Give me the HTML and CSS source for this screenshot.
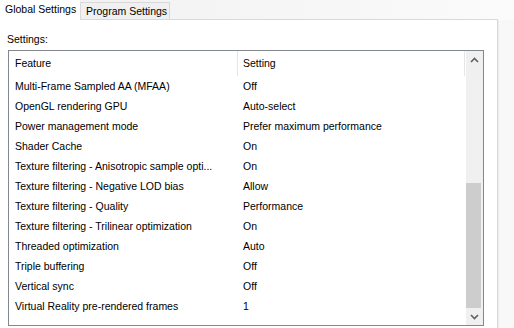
FILE: index.html
```html
<!DOCTYPE html>
<html>
<head>
<meta charset="utf-8">
<link rel="stylesheet" href="styles.css">
</head>
<body>
<div class="top">
  <div class="tabs">
    <div class="tab tab-active">Global Settings</div>
    <div class="tab tab-idle">Program Settings</div>
    <div class="tab-fill"></div>
  </div>
</div>
<div class="main">
  <div class="panel">
    <div class="label">Settings:</div>
    <div class="listbox">
      <div class="table">
        <div class="row head">
          <div class="c1">Feature</div>
          <div class="c2">Setting</div>
        </div>
        <div class="row"><div class="c1">Multi-Frame Sampled AA (MFAA)</div><div class="c2">Off</div></div>
        <div class="row"><div class="c1">OpenGL rendering GPU</div><div class="c2">Auto-select</div></div>
        <div class="row"><div class="c1">Power management mode</div><div class="c2">Prefer maximum performance</div></div>
        <div class="row"><div class="c1">Shader Cache</div><div class="c2">On</div></div>
        <div class="row"><div class="c1">Texture filtering - Anisotropic sample opti...</div><div class="c2">On</div></div>
        <div class="row"><div class="c1">Texture filtering - Negative LOD bias</div><div class="c2">Allow</div></div>
        <div class="row"><div class="c1">Texture filtering - Quality</div><div class="c2">Performance</div></div>
        <div class="row"><div class="c1">Texture filtering - Trilinear optimization</div><div class="c2">On</div></div>
        <div class="row"><div class="c1">Threaded optimization</div><div class="c2">Auto</div></div>
        <div class="row"><div class="c1">Triple buffering</div><div class="c2">Off</div></div>
        <div class="row"><div class="c1">Vertical sync</div><div class="c2">Off</div></div>
        <div class="row"><div class="c1">Virtual Reality pre-rendered frames</div><div class="c2">1</div></div>
      </div>
      <div class="scrollbar">
        <div class="sb-btn">
          <svg width="9" height="6" viewBox="0 0 9 6"><polyline points="1,5 4.5,1.5 8,5" fill="none" stroke="#606060" stroke-width="1.6"/></svg>
        </div>
        <div class="sb-track"><div class="sb-thumb"></div></div>
        <div class="sb-btn">
          <svg width="9" height="6" viewBox="0 0 9 6"><polyline points="1,1 4.5,4.5 8,1" fill="none" stroke="#606060" stroke-width="1.6"/></svg>
        </div>
      </div>
    </div>
  </div>
  <div class="side"></div>
</div>
</body>
</html>
```

FILE: styles.css
```css
html, body {
  margin: 0;
  padding: 0;
}
body {
  width: 514px;
  height: 328px;
  overflow: hidden;
  background: #f7f7f7;
  font-family: "Liberation Sans", Arial, sans-serif;
  font-size: 10.5px;
  color: #000;
}
.top {
  height: 20px;
  background: linear-gradient(to right, #f0f0f0, #fbfbfb);
}
.tabs {
  width: 498px;
  height: 20px;
  display: flex;
  align-items: flex-end;
}
.tab {
  box-sizing: border-box;
  white-space: nowrap;
}
.tab-active {
  width: 80px;
  height: 20px;
  background: #fff;
  padding-left: 5px;
  line-height: 19px;
}
.tab-idle {
  width: 90px;
  height: 18px;
  background: #f0f0f0;
  border: 1px solid #d9d9d9;
  padding-left: 5px;
  line-height: 17px;
}
.tab-fill {
  flex: 1;
  height: 20px;
  box-sizing: border-box;
  border-bottom: 1px solid #d9d9d9;
}
.main {
  display: flex;
  height: 308px;
}
.panel {
  width: 498px;
  box-sizing: border-box;
  background: #fff;
  border-right: 1px solid #d9d9d9;
}
.side {
  flex: 1;
  background: #f8f8f8;
  border-left: 1px solid #ececec;
}
.label {
  margin: 13px 0 0 7px;
  height: 17px;
  line-height: 13px;
}
.listbox {
  margin-left: 8px;
  width: 476px;
  height: 276px;
  box-sizing: border-box;
  border: 1px solid #828790;
  display: flex;
}
.table {
  flex: 1;
  overflow: hidden;
}
.row {
  display: flex;
  height: 20px;
  line-height: 20px;
}
.row.head {
  height: 25px;
  line-height: 25px;
}
.c1 {
  width: 229px;
  box-sizing: border-box;
  padding: 0 6px;
  white-space: nowrap;
}
.c2 {
  width: 227px;
  box-sizing: border-box;
  padding-left: 5px;
  white-space: nowrap;
}
.head .c1 {
  border-right: 1px solid #e5e5e5;
}
.head .c2 {
  border-right: 1px solid #e5e5e5;
}
.scrollbar {
  width: 17px;
  background: #f0f0f0;
  display: flex;
  flex-direction: column;
}
.sb-btn {
  height: 17px;
  display: flex;
  align-items: center;
  justify-content: center;
}
.sb-track {
  flex: 1;
  display: flex;
  flex-direction: column;
  justify-content: flex-end;
}
.sb-thumb {
  width: 15px;
  height: 125px;
  background: #cdcdcd;
}
```
